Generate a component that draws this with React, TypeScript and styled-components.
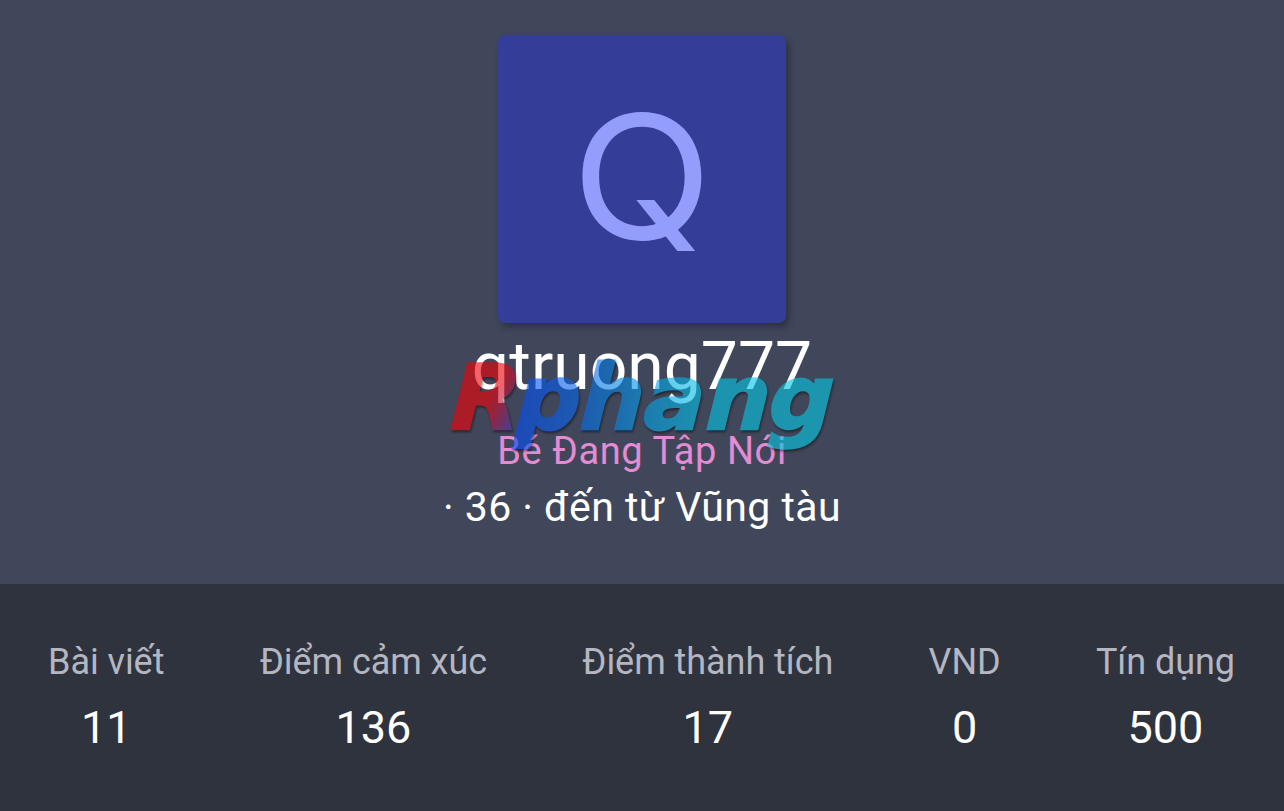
import styled, { createGlobalStyle } from "styled-components";

const stats = [
  { label: "Bài viết", value: 11 },
  { label: "Điểm cảm xúc", value: 136 },
  { label: "Điểm thành tích", value: 17 },
  { label: "VND", value: 0 },
  { label: "Tín dụng", value: 500 }
];

export default function App() {
  return (
    <Page>
      <GlobalStyle />
      <Header>
        <Avatar>
          <Initial>Q</Initial>
        </Avatar>
        <NameBlock>
          <Username>qtruong777</Username>
          <Watermark />
        </NameBlock>
        <UserTitle>Bé Đang Tập Nói</UserTitle>
        <Blurb>· 36 · đến từ Vũng tàu</Blurb>
      </Header>
      <Stats>
        {stats.map(({ label, value }) => (
          <Stat key={label}>
            <Label>{label}</Label>
            <Value>{value}</Value>
          </Stat>
        ))}
      </Stats>
    </Page>
  );
}

const Watermark = () => (
  <WatermarkSvg width="410" height="120" viewBox="440 345 410 120">
    <defs>
      <linearGradient
        id="brand-red"
        gradientUnits="userSpaceOnUse"
        x1="488"
        y1="-30"
        x2="516"
        y2="-18"
      >
        <stop offset="0" stopColor="#ee0208" />
        <stop offset="0.3" stopColor="#d00c28" />
        <stop offset="1" stopColor="#5838a0" />
      </linearGradient>
      <linearGradient
        id="brand-blue"
        gradientUnits="userSpaceOnUse"
        x1="515"
        y1="0"
        x2="832"
        y2="0"
      >
        <stop offset="0" stopColor="#064cf4" />
        <stop offset="0.2" stopColor="#0568e8" />
        <stop offset="0.42" stopColor="#05a0e4" />
        <stop offset="0.6" stopColor="#05c4e4" />
        <stop offset="1" stopColor="#05c8e4" />
      </linearGradient>
    </defs>
    {/* the slant pivots on the baseline so the letters keep their spacing */}
    <g transform="translate(0 429) skewX(-3)">
      <WatermarkText x="450 515 579 643 705 768" y="0">
        <RedPart>R</RedPart>phang
      </WatermarkText>
    </g>
  </WatermarkSvg>
);

const GlobalStyle = createGlobalStyle`
  body {
    margin: 0;
    background: #2f333e;
    font-family: Roboto, "Liberation Sans", sans-serif;
  }
`;

const Page = styled.div`
  display: flex;
  flex-direction: column;
  min-height: 811px;
`;

const Header = styled.header`
  display: flex;
  flex-direction: column;
  align-items: center;
  box-sizing: border-box;
  height: 584px;
  padding-top: 35px;
  background: #41475a;
  color: #fff;
`;

const Avatar = styled.div`
  display: flex;
  align-items: center;
  justify-content: center;
  width: 288px;
  height: 288px;
  border-radius: 7px;
  background: #343e98;
  box-shadow: 3px 4px 6px rgba(20, 24, 36, 0.45);
`;

const Initial = styled.span`
  font-family: Inter, sans-serif;
  font-size: 172px;
  font-weight: 440;
  line-height: 284px;
  padding-bottom: 6px;
  color: #939dfb;
  transform: scaleX(1.07);
`;

const NameBlock = styled.div`
  position: relative;
`;

const Username = styled.h1`
  margin: 0;
  font-size: 66px;
  font-weight: 400;
  line-height: 88px;
`;

const WatermarkSvg = styled.svg`
  position: absolute;
  top: 22px;
  left: 50%;
  margin-left: -202px;
  opacity: 0.61;
  filter: drop-shadow(1px 2px 1px rgba(0, 0, 0, 0.7));
  pointer-events: none;
`;

const WatermarkText = styled.text`
  font-family: "DejaVu Sans", sans-serif;
  font-size: 90px;
  font-style: oblique;
  font-weight: 700;
  fill: url(#brand-blue);
  stroke: url(#brand-blue);
  stroke-width: 2.5px;
  stroke-linejoin: miter;
`;

const RedPart = styled.tspan`
  fill: url(#brand-red);
  stroke: url(#brand-red);
`;

const UserTitle = styled.div`
  font-size: 38px;
  line-height: 56px;
  letter-spacing: 0.6px;
  color: #e38bd3;
  margin-top: 12px;
`;

const Blurb = styled.div`
  font-size: 41px;
  line-height: 56px;
  letter-spacing: 0.45px;
`;

const Stats = styled.dl`
  display: flex;
  justify-content: space-between;
  margin: 0;
  padding: 50px 49px 0 48px;
  background: #2f333e;
`;

const Stat = styled.div`
  display: flex;
  flex-direction: column;
  align-items: center;
`;

const Label = styled.dt`
  font-size: 36px;
  line-height: 56px;
  letter-spacing: -0.05px;
  color: #b4b6c1;
`;

const Value = styled.dd`
  margin: 0;
  font-size: 45px;
  line-height: 76px;
  color: #fff;
`;
